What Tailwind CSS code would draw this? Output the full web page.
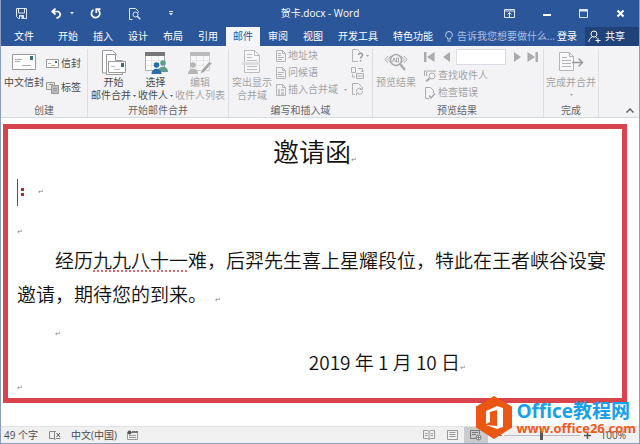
<!DOCTYPE html>
<html lang="zh-CN">

<head>
    <meta charset="UTF-8">
    <meta name="viewport" content="width=device-width, initial-scale=1.0">
    <title>贺卡.docx - Word</title>
    <script src="https://cdn.jsdelivr.net/npm/@tailwindcss/browser@4"></script>
</head>

<body class="min-h-screen flex flex-col bg-white border-x border-[#8c9dbd] text-[10px] leading-[13px] text-[#4a4a4a] font-['Open_Sans','Noto_Sans_CJK_SC',sans-serif]">
    <header class="bg-[#2b579a] text-white -mx-px">
        <!-- title bar -->
        <div class="grid grid-cols-[1fr_auto_1fr] items-center h-[27px]">
            <div class="flex items-center pl-4">
                <button aria-label="保存" class="mr-6">
                    <svg width="11" height="11" viewBox="0 0 11 11" fill="none" stroke="#dfe8f7"><path d="M.5.5h10v10h-8l-2-2z" /><path d="M2.500 1v4h6V1" /><path d="M3 7h5v4H3z" fill="#dfe8f7" stroke="none" /><path d="M4 8.500h1.500V11H4z" fill="#2b579a" stroke="none" /></svg>
                </button>
                <button aria-label="撤消" class="mr-2">
                    <svg width="11" height="11" viewBox="0 0 11 11" fill="none" stroke="#fff" stroke-width="1.700"><path d="M4.500.5 1.200 3.500l3.300 3M1.500 3.500h5a3 3 0 0 1 1 5.700L5.500 10.300" /></svg>
                </button>
                <button aria-label="撤消选项" class="mr-4">
                    <svg width="4" height="3" viewBox="0 0 4 3"><path d="M0 0h4L2 2.500z" fill="#dfe8f7" /></svg>
                </button>
                <button aria-label="恢复" class="mr-7">
                    <svg width="11" height="11" viewBox="0 0 11 11" fill="none" stroke="#fff" stroke-width="1.700"><path d="M3.500 1.800a4.200 4.200 0 1 0 4.700.3M6.300 5V1.200H10.500" /></svg>
                </button>
                <button aria-label="打印预览" class="mr-7">
                    <svg width="12" height="12" viewBox="0 0 12 12" fill="none" stroke="#dfe8f7"><path d="M3.500 11.500h-3V.5h6l3 3v1" /><circle cx="6.500" cy="6.500" r="2.500" /><path d="m8.300 8.300 3 3" stroke-width="1.500" /></svg>
                </button>
                <button aria-label="自定义快速访问工具栏">
                    <svg width="4" height="5" viewBox="0 0 4 5" fill="#dfe8f7"><path d="M0 0h4v1H0zM0 2h4L2 4.500z" /></svg>
                </button>
            </div>
            <h1>贺卡.docx - Word</h1>
            <div class="flex items-center justify-end pr-[15px]">
                <button aria-label="功能区显示选项" class="mr-[27px]">
                    <svg width="11" height="9" viewBox="0 0 11 9" fill="none" stroke="#dfe8f7"><path d="M.5.5h10v8H.5zM.5 2h10M5.500 8V3.500M3.500 5.500l2-2 2 2" /></svg>
                </button>
                <button aria-label="最小化" class="mr-7">
                    <svg width="9" height="9" viewBox="0 0 9 9"><path d="M1 5h8v2H1z" fill="#fff" /></svg>
                </button>
                <button aria-label="最大化" class="mr-7">
                    <svg width="9" height="9" viewBox="0 0 9 9" fill="none" stroke="#dfe8f7"><path d="M.5.5h8v8h-8z" /><path d="M0 1.500h9" stroke-width="2" /></svg>
                </button>
                <button aria-label="关闭">
                    <svg width="9" height="9" viewBox="0 0 9 9" stroke="#fff" stroke-width="2"><path d="m1.500 1.500 6 6m0-6-6 6" /></svg>
                </button>
            </div>
        </div>
        <!-- tabs -->
        <nav class="flex items-stretch gap-px h-[19px] pl-[7px] whitespace-nowrap">
            <button class="px-[7px] mr-[9px]">文件</button>
            <button class="px-[7px]">开始</button>
            <button class="px-[7px]">插入</button>
            <button class="px-[7px]">设计</button>
            <button class="px-[7px]">布局</button>
            <button class="px-[7px]">引用</button>
            <button class="px-[7px] bg-[#f4f5f9] text-[#2b579a]">邮件</button>
            <button class="px-[7px]">审阅</button>
            <button class="px-[7px]">视图</button>
            <button class="px-[7px]">开发工具</button>
            <button class="px-[7px]">特色功能</button>
            <button class="flex items-center gap-1 pl-1 text-[#a9bfe3]">
                <svg width="8" height="11" viewBox="0 0 8 11" fill="none" stroke="#c3d3ee"><path d="M2.500 8V6.800C1.200 6 .6 5 .6 3.900a3.400 3.400 0 0 1 6.800 0C7.400 5 6.800 6 5.500 6.800V8zM2.500 10h3" /></svg>
                告诉我您想要做什么...
            </button>
            <button class="ml-auto pr-[7px]">登录</button>
            <button class="flex items-center gap-1 bg-[#1f4278] px-[3px]">
                <svg width="13" height="13" viewBox="0 0 13 13" fill="none" stroke="#fff"><circle cx="6" cy="4" r="3" /><path d="M.8 12c.2-3 1.700-4.500 3.700-5M7.500 7l1.500 1M10 8v5M7.500 10.500h5" /></svg>
                <span class="pr-3">共享</span>
            </button>
        </nav>
    </header>

    <!-- ribbon -->
    <div class="flex items-stretch h-[72px] pt-[3px] bg-[#f3f3f6] border-b border-[#d3dbe2] whitespace-nowrap">
        <section class="flex flex-col px-[3px] border-r border-[#dedee2]">
            <div class="flex gap-[2px]">
                <button class="flex flex-col items-center">
                    <svg class="mb-[1px]" width="26" height="26" viewBox="0 0 26 26" fill="none"><path d="M1.500 5.500h23v15h-23z" fill="#fff" stroke="#999" /><path d="M19 7h3v4h-3z" fill="#3d6a78" /><path d="M4 10.500h7M4 12.500h5M11 16.500h9" stroke="#aaa" /></svg>
                    <span>中文信封</span>
                </button>
                <div class="flex flex-col gap-[11px] pt-2 pr-[3px]">
                    <button class="flex items-center gap-[2px]">
                        <svg width="13" height="10" viewBox="0 0 13 10" fill="none"><path d="M.5.5h12v8H.5z" fill="#fff" stroke="#999" /><path d="M9 2h2v2H9z" fill="#3d6a78" /><path d="M2 4.500h3M5 6.500h4" stroke="#aaa" /></svg>
                        信封
                    </button>
                    <button class="flex items-center gap-[2px]">
                        <svg width="13" height="12" viewBox="0 0 13 12" fill="#e8e8e8" stroke="#999"><path d="M.5.5h8v7h-8z" /><path d="M5.500 3.500h7v8h-7z" fill="#bcbcbc" /><path d="M3 2.500h4M7 6.500h4M7 8.500h4" /></svg>
                        标签
                    </button>
                </div>
            </div>
            <h2 class="mt-auto text-center text-[#666]">创建</h2>
        </section>

        <section class="flex flex-col px-[3px] border-r border-[#dedee2]">
            <div class="flex gap-[2px]">
                <button class="flex flex-col items-center">
                    <svg class="mb-[1px]" width="26" height="26" viewBox="0 0 26 26" fill="#fff" stroke="#999"><path d="M1.500 24V1.500h10l4 4V24z" /><path d="M5.500 25.500V5.500h9l7 7v13z" /><path d="M14.500 5.500v6h7" /><path d="M7.500 12.500h17v11h-17z" /><path d="M20 14h3v4h-3z" fill="#3d6a78" stroke="none" /><path d="M10 17.500h4M13 20.500h6" stroke="#bbb" /></svg>
                    <span>开始</span>
                    <span class="flex items-center gap-[2px]">邮件合并
                        <svg width="3" height="2" viewBox="0 0 3 2"><path d="M0 0h3L1.500 2z" fill="#555" /></svg></span>
                </button>
                <button class="flex flex-col items-center">
                    <svg class="mb-[1px]" width="26" height="26" viewBox="0 0 26 26"><path d="M2.500 4.500h19v17h-19z" fill="#fff" stroke="#aaa" /><path d="M2 3h20v4H2z" fill="#777" /><path d="M8.500 7v14M15.500 7v14M3 11.500h18M3 16.500h18" stroke="#e6e6e6" /><circle cx="20" cy="14" r="2.800" fill="#5f9c8c" /><path d="M15 23c0-7 10-7 10 0z" fill="#5f9c8c" /><circle cx="13.500" cy="16" r="2.800" fill="#2b6cab" /><path d="M8.500 25c0-7 10-7 10 0z" fill="#2b6cab" /></svg>
                    <span>选择</span>
                    <span class="flex items-center gap-[2px]">收件人
                        <svg width="3" height="2" viewBox="0 0 3 2"><path d="M0 0h3L1.500 2z" fill="#555" /></svg></span>
                </button>
                <button class="flex flex-col items-center text-[#a3a3a3]" disabled>
                    <svg class="mb-[1px]" width="26" height="26" viewBox="0 0 26 26"><path d="M3.500 4.500h19v17h-19z" fill="#f8f8fa" stroke="#ccc" /><path d="M3 3h20v4H3z" fill="#bbb" /><path d="M9.500 7v14M16.500 7v14M4 11.500h18M4 16.500h18" stroke="#e6e6e6" /><circle cx="6" cy="16" r="2.800" fill="#b5b5b5" /><path d="M1 25c0-7 10-7 10 0z" fill="#b5b5b5" /><path d="m13 25 1.500-4 8-9 2.500 2.500-8 9z" fill="#a8a8a8" stroke="#f3f3f6" /></svg>
                    <span>编辑</span>
                    <span>收件人列表</span>
                </button>
            </div>
            <h2 class="mt-auto text-center text-[#666]">开始邮件合并</h2>
        </section>

        <section class="flex flex-col px-[3px] border-r border-[#dedee2] text-[#a3a3a3]">
            <div class="flex gap-1">
                <button class="flex flex-col items-center" disabled>
                    <svg class="mb-[1px]" width="22" height="26" viewBox="0 0 22 26" fill="none" stroke="#bbb"><path d="M3.500 1.500h10l5 5v17h-15z" fill="#f8f8fa" /><path d="M13.500 1.500v5h5M6 5.500h5M6 8.500h5M6 11.500h10M6 17.500h10M6 20.500h10" /><path d="M1 13h18v3H1z" fill="#ddd" stroke="none" /></svg>
                    <span>突出显示</span>
                    <span>合并域</span>
                </button>
                <div class="flex flex-col gap-1">
                    <button class="flex items-center gap-[2px]" disabled>
                        <svg width="10" height="12" viewBox="0 0 10 12" fill="none" stroke="#b5b5b5"><path d="M.5.5h6l3 3v8h-9zM6.500.5v3h3M2 3.500h3M2 5.500h3M2 7.500h6M2 9.500h4" /></svg>
                        地址块
                    </button>
                    <button class="flex items-center gap-[2px]" disabled>
                        <svg width="10" height="12" viewBox="0 0 10 12" fill="none" stroke="#b5b5b5"><path d="M.5.5h6l3 3v8h-9zM6.500.5v3h3M2 5.500h6M2 7.500h4M2 9.500h6" /></svg>
                        问候语
                    </button>
                    <button class="flex items-center gap-[2px]" disabled>
                        <svg width="10" height="12" viewBox="0 0 10 12" fill="none" stroke="#b5b5b5"><path d="M.5.5h6l3 3v8h-9zM6.500.5v3h3" /><path d="M2 5h2v6H2zM5 5h3v2H5zM5 8h3v3H5z" fill="#c5c5c5" stroke="none" /></svg>
                        插入合并域
                        <svg class="ml-1" width="3" height="2" viewBox="0 0 3 2"><path d="M0 0h3L1.500 2z" fill="#a3a3a3" /></svg>
                    </button>
                </div>
                <div class="flex flex-col gap-1">
                    <button aria-label="规则" class="flex items-center gap-[2px] h-[13px]" disabled>
                        <svg width="13" height="13" viewBox="0 0 13 13" fill="none" stroke="#b5b5b5"><path d="M7 12.500H1.500V.5h5l3 3" /><path d="M7.500 6c0-2.500 4-2.500 4 0 0 1.500-2 1.500-2 3.500M9.500 11v1.500" stroke="#999" stroke-width="1.500" /></svg>
                        <svg width="3" height="2" viewBox="0 0 3 2"><path d="M0 0h3L1.500 2z" fill="#a3a3a3" /></svg>
                    </button>
                    <button aria-label="匹配域" class="h-[13px]" disabled>
                        <svg width="14" height="13" viewBox="0 0 14 13" fill="none" stroke="#b0b0b0"><path d="M.5 1.500h4v5h-4zM5.500 7.500h7v5h-7zM7 2.500h4.500V6M10 4.500 11.500 6 13 4.500M4 11H1.500V8M5.500 10h7" /></svg>
                    </button>
                    <button aria-label="更新标签" class="h-[13px]" disabled>
                        <svg width="14" height="13" viewBox="0 0 14 13" fill="none" stroke="#b0b0b0"><path d="M4 11.500H1.500V.5h6l3 3" /><path d="M5.500 8.500a3 3 0 0 1 5-2.500M11.500 4v2.500H9M11.500 8a3 3 0 0 1-5 2.500M5.500 12.500V10H8" /></svg>
                    </button>
                </div>
            </div>
            <h2 class="mt-auto text-center text-[#666]">编写和插入域</h2>
        </section>

        <section class="flex flex-col pl-[3px] pr-[5px] border-r border-[#dedee2] text-[#a3a3a3]">
            <div class="flex gap-2">
                <button class="flex flex-col items-center self-start" disabled>
                    <svg class="mb-[1px]" width="26" height="26" viewBox="0 0 26 26" fill="none" stroke="#aaa"><path d="M5 7 2 10.500 5 14M8 7l-3 3.500L8 14M18 7l3 3.500-3 3.500M21 7l3 3.500-3 3.500" /><circle cx="13" cy="11" r="5.500" stroke-width="1.500" fill="#f3f3f6" /><path d="M9.500 13 11 9l1.500 4M13.500 9h2v4h-2z" /><path d="m17 15 5 6" stroke-width="2.500" /></svg>
                    <span>预览结果</span>
                </button>
                <div class="flex flex-col gap-1">
                    <div class="flex items-center">
                        <button aria-label="首记录" class="mr-2" disabled>
                            <svg width="11" height="10" viewBox="0 0 11 10" fill="#aaa"><path d="M0 0h2.500v10H0zM10.500 0v10L3 5z" /></svg>
                        </button>
                        <button aria-label="上一记录" class="mr-[6px]" disabled>
                            <svg width="7" height="10" viewBox="0 0 7 10"><path d="M7 0v10L0 5z" fill="#aaa" /></svg>
                        </button>
                        <input type="text" aria-label="记录" class="w-[50px] h-4 bg-white border border-[#dcdce0] px-1 mr-2" disabled>
                        <button aria-label="下一记录" class="mr-[6px]" disabled>
                            <svg width="7" height="10" viewBox="0 0 7 10"><path d="M0 0v10l7-5z" fill="#aaa" /></svg>
                        </button>
                        <button aria-label="尾记录" disabled>
                            <svg width="11" height="10" viewBox="0 0 11 10" fill="#aaa"><path d="M8.500 0H11v10H8.500zM.5 0v10L8 5z" /></svg>
                        </button>
                    </div>
                    <button class="flex items-center gap-[2px]" disabled>
                        <svg width="12" height="12" viewBox="0 0 12 12" fill="none" stroke="#aaa"><path d="M0 1h12M2.500 2v4M.5 1v5" /><circle cx="8" cy="6" r="3" /><path d="m6 8-4 3.500" stroke-width="2" /></svg>
                        查找收件人
                    </button>
                    <button class="flex items-center gap-[2px]" disabled>
                        <svg width="12" height="12" viewBox="0 0 12 12" fill="none" stroke="#aaa"><path d="M5 11.500H1.500V.5h5l3 3V6" /><path d="m5 8.500 2 2.500 4-4.500" stroke-width="1.500" /></svg>
                        检查错误
                    </button>
                </div>
            </div>
            <h2 class="mt-auto text-center text-[#666]">预览结果</h2>
        </section>

        <section class="flex flex-col px-[2px] border-r border-[#dedee2] text-[#a3a3a3]">
            <button class="flex flex-col items-center" disabled>
                <svg class="mb-[1px]" width="26" height="26" viewBox="0 0 26 26" fill="none" stroke="#b5b5b5"><path d="M1.500 3.500h10l4 4v14h-14zM11.500 3.500v4h4M4 8.500h5M4 11.500h9M4 14.500h9M4 17.500h9" fill="#f8f8fa" /><path d="M14 13.500h10M20.500 9.500l4 4-4 4" stroke="#999" stroke-width="1.500" /></svg>
                <span>完成并合并</span>
                <svg class="mt-[5px]" width="3" height="2" viewBox="0 0 3 2"><path d="M0 0h3L1.500 2z" fill="#a3a3a3" /></svg>
            </button>
            <h2 class="mt-auto text-center text-[#666]">完成</h2>
        </section>
        <button aria-label="折叠功能区" class="ml-auto mr-[5px] mb-1 self-end">
            <svg width="8" height="5" viewBox="0 0 8 5" fill="none" stroke="#666" stroke-width="1.500"><path d="m.5 4.500 3.500-3.500 3.500 3.500" /></svg>
        </button>
    </div>

    <!-- document -->
    <main class="grow flex flex-col pt-[6px] pl-[2px] pr-3 pb-[23px]">
        <article class="grow border-[5px] border-[#d9434b] px-[9px] text-[19px] leading-[34px] text-[#111] font-[350] font-['Noto_Sans_CJK_SC',sans-serif]">
            <h2 class="text-center text-[26px] leading-[44px] mb-[2px]">邀请函<span class="text-[7px] leading-none text-[#888] font-['DejaVu_Sans']">↵</span></h2>
            <p class="flex items-center h-[34px]">
                <span class="w-px h-[27px] bg-[#555]"></span>
                <span class="flex flex-col gap-[2px] ml-[3px]"><i class="size-[3px] bg-[#b3262b]"></i><i class="size-[3px] bg-[#b3262b]"></i></span>
                <span class="ml-[14px] text-[7px] leading-none text-[#888] font-['DejaVu_Sans']">↵</span>
            </p>
            <p><span class="text-[7px] leading-none text-[#888] font-['DejaVu_Sans']">↵</span></p>
            <p class="indent-[38px]">经历<span class="underline decoration-dotted decoration-[#e0686c] decoration-2 underline-offset-2">九九八十一</span>难，后羿先生喜上星耀段位，特此在王者峡谷设宴邀请，期待您的到来。<span class="ml-2 text-[7px] leading-none text-[#888] font-['DejaVu_Sans']">↵</span></p>
            <p class="indent-[38px]"><span class="text-[7px] leading-none text-[#888] font-['DejaVu_Sans']">↵</span></p>
            <p class="text-right pr-[147px]">2019 年 1 月 10 日<span class="text-[7px] leading-none text-[#888] font-['DejaVu_Sans']">↵</span></p>
            <p class="text-[7px] leading-[19px] text-[#888] font-['DejaVu_Sans']">↵</p>
        </article>
    </main>

    <!-- status bar -->
    <footer class="flex items-center h-[18px] pl-[3px] pr-[13px] bg-[#f0f0f1] border-t border-[#e2e2e4] border-b border-b-[#8c9dbd] whitespace-nowrap">
        <span>49 个字</span>
        <button aria-label="校对" class="ml-[11px]">
            <svg width="12" height="10" viewBox="0 0 12 10" fill="none" stroke="#888"><path d="M5.500 1.500v8M7 1.500H.5v7H5l1 1 1-1h4.500" /><path d="m7.500 3 3.500 4m0-4L7.500 7" stroke="#555" /></svg>
        </button>
        <span class="ml-[10px]">中文(中国)</span>
        <button aria-label="宏录制" class="ml-[10px]">
            <svg width="11" height="10" viewBox="0 0 11 10" fill="none" stroke="#999"><path d="M.5 2.500h10v7H.5zM2 5.500h7M2 7.500h7" /><path d="M5 1h6v2H5z" fill="#777" stroke="none" /><circle cx="2.500" cy="2.500" r="2" fill="#555" stroke="none" /></svg>
        </button>
        <button aria-label="阅读视图" class="ml-auto">
            <svg width="12" height="10" viewBox="0 0 12 10" fill="none" stroke="#999"><path d="M.5.5h4l1.500 1 1.500-1h4v8h-4L6 9.500l-1.500-1h-4zM6 1.500v8M2 3.500h2.500M2 5.500h2.500M7.500 3.500H10M7.500 5.500H10" /></svg>
        </button>
        <button aria-label="页面视图" class="ml-3">
            <svg width="11" height="10" viewBox="0 0 11 10" fill="none" stroke="#999"><path d="M.5.5h10v9H.5zM2.500 2.500h6M2.500 4.500h6M2.500 6.500h6" /></svg>
        </button>
        <button aria-label="Web 版式视图" class="self-stretch flex items-center justify-center w-6 ml-[6px] bg-[#cbcbcd]">
            <svg width="12" height="11" viewBox="0 0 12 11" fill="none" stroke="#777"><path d="M6 8.500H.5v-8h9V4M2 2.500h6M2 4.500h4" /><circle cx="8.500" cy="7.500" r="2.500" fill="#eee" /><path d="M6.500 7.500h4M8.500 5.500v4" /></svg>
        </button>
        <button aria-label="缩小" class="ml-[6px] w-2 h-px bg-[#777]"></button>
        <input type="range" aria-label="显示比例" min="0" max="100" value="50" class="appearance-none w-[76px] h-px ml-[2px] bg-[#bbb] [&::-webkit-slider-thumb]:appearance-none [&::-webkit-slider-thumb]:w-[3px] [&::-webkit-slider-thumb]:h-[9px] [&::-webkit-slider-thumb]:bg-[#555]">
        <button aria-label="放大" class="ml-1">
            <svg width="7" height="7" viewBox="0 0 7 7" stroke="#555" stroke-width="1.500"><path d="M0 3.500h7M3.500 0v7" /></svg>
        </button>
        <span class="ml-[10px]">100%</span>
    </footer>

    <!-- site badge -->
    <a href="#" class="absolute right-1 bottom-[5px] flex items-center gap-1 font-bold whitespace-nowrap">
        <svg width="36" height="43" viewBox="0 0 36 43"><path d="M18 0 36 10.500v21L18 43 0 31.500v-21z" fill="#ea5712" /><path d="M10 15 21 10l6 2v19l-6 2-11-4 11 1V14l-7 2v10l-4 2z" fill="#fff" /></svg>
        <span class="flex flex-col">
            <span class="text-[19px] leading-[20px] text-[#18a0ea]">Office教程网</span>
            <span class="text-[13px] leading-[14px] text-[#ee5a1c]">www.office26.com</span>
        </span>
    </a>
</body>

</html>
